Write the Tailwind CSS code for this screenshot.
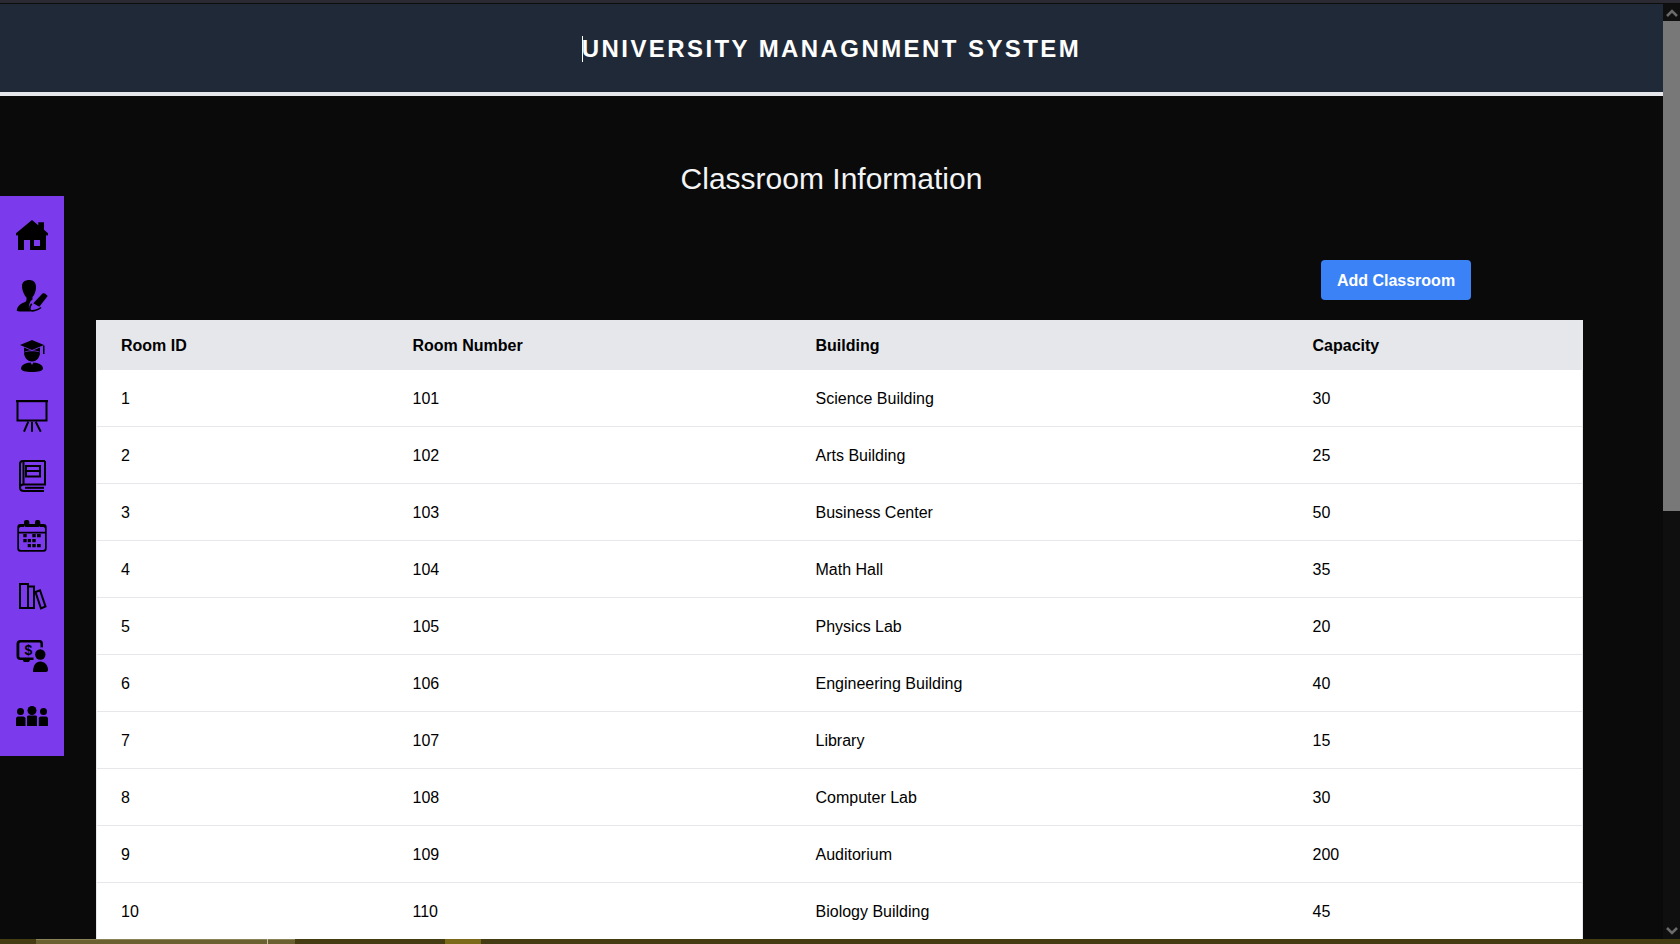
<!DOCTYPE html>
<html lang="en">
<head>
    <meta charset="UTF-8">
    <meta name="viewport" content="width=device-width, initial-scale=1.0">
    <title>University Managnment System</title>
    <script src="https://cdn.jsdelivr.net/npm/@tailwindcss/browser@4"></script>
</head>
<body class="h-screen overflow-hidden flex flex-col bg-[#0a0a0a] font-['Liberation_Sans',Arial,sans-serif]">
    <!-- browser chrome strip -->
    <div class="h-[4px] shrink-0 bg-[#2b2a33] border-b border-[#0c0c0d]"></div>

    <div class="flex-1 min-h-0 flex">
        <main class="relative flex-1 min-w-0 overflow-hidden">
            <header class="h-[88px] box-content bg-[#1f2937] border-b-4 border-[#e5e7eb] flex items-center justify-center">
                <h1 class="relative mt-[2px] text-2xl font-bold tracking-[2.42px] text-white">
                    <span class="absolute left-0 top-[3px] w-px h-[26px] bg-white"></span>UNIVERSITY MANAGNMENT SYSTEM
                </h1>
            </header>

            <!-- sidebar -->
            <nav class="absolute left-0 top-[192px] w-16 h-[560px] bg-[#7c3aed] flex flex-col items-center gap-7 py-6">
                <svg class="w-8 h-8" viewBox="0 0 32 32" fill="#000"><path fill-rule="evenodd" d="M16 0 22.3 5.2V2.3H28V9.800L32 13.200V15.600L30 15.200V30H18V20H8V30H2V15.200L0 15.600V13.200ZM18 20V26H24V20Z"/><path d="M14 20H18V30H14Z"/></svg>
                <svg class="w-8 h-8" viewBox="0 0 32 32" fill="#000"><path d="M6 6C6 2 9 0 13.500 0 18 0 20 3 20 7 20 11 18.500 15 16.500 17L16.500 19.500C14 21 12.500 25 13 29L14.500 31.600H6C3 31.600 1 31.300 .7 30.500 1.500 26 4 24 8 22.500 9.500 22 10.500 21 10.500 19.500V17.500C8 15 6 10 6 6Z"/><path d="M26.700 13.300 29 13.500 31.700 16 23.300 26.700 17.300 23.300Z"/><path d="M15.700 23.800C14 26 13.500 29 14.500 30.500 17 31.500 22 30 25 27.500" fill="none" stroke="#000" stroke-width="1.600"/></svg>
                <svg class="w-8 h-8" viewBox="0 0 32 32" fill="#000"><path d="M16 0 28 5 16 10 4 5Z"/><path d="M27 5.500H28.500V14H27Z"/><path d="M8 7.500 16 10.800 24 7.500V12C22 10.800 19 10.500 16 10.500 13 10.500 10 10.800 8 12Z"/><path d="M8 12.500C10 11.500 13 11.300 16 11.300 19 11.300 22 11.500 24 12.500 24 17 21 21.500 16 21.500 11 21.500 8 17 8 12.500Z"/><path d="M11 23 14.500 22.500 16 25 17.500 22.500 21 23C25 24 27 26 27 28.500 27 31 22 32 16 32 10 32 5 31 5 28.500 5 26 7 24 11 23Z"/></svg>
                <svg class="w-8 h-8" viewBox="0 0 32 32" fill="none" stroke="#000"><path d="M0 1H32" stroke-width="2.400"/><path d="M1.500 1V20.500H30.500V1" stroke-width="2"/><path d="M12.300 21.700 8 31.700M16 21.700V31.700M19.700 21.700 24.700 31.700" stroke-width="2"/></svg>
                <svg class="w-8 h-8" viewBox="0 0 32 32" fill="none" stroke="#000" stroke-width="2"><path d="M29 1H7C5 1 4 2.500 4 4V27.500C4 29.500 5.500 31 8 31H28M29 1V24.500H8C5.500 24.500 4 26 4 27.500"/><path d="M7.500 1V24"/><path d="M9 27.800H28"/><path d="M10 6H24V16.500H10ZM10 11H24"/></svg>
                <svg class="w-8 h-8" viewBox="0 0 32 32" fill="#000"><path fill-rule="evenodd" d="M4.300 4H8V7H5.300C4 7 3 7.500 3 9V11.700H29V9C29 7.500 28 7 26.700 7H24V4H27.700C30 4 30.700 5.500 30.700 7.500V28.500C30.700 30.500 30 31.700 27.700 31.700H4.300C2 31.700 1.300 30.500 1.300 28.500V7.500C1.300 5.500 2 4 4.300 4ZM3 13.500V28C3 29.300 3.700 30 5 30H27C28.300 30 29 29.300 29 28V13.500Z"/><path d="M10 4H22V7H10Z"/><rect x="8" y="0" width="5.300" height="7" rx="2"/><rect x="19" y="0" width="5.300" height="7" rx="2"/><path d="M7.300 14H10.700V17.300H7.300ZM16.300 14H19.700V17.300H16.300ZM21 14H24.700V17.300H21ZM7.300 19H10.700V22.300H7.300ZM11.700 19H15V22.300H11.700ZM16.300 19H19.700V22.300H16.300ZM11.700 24H15V27.300H11.700ZM16.300 24H19.700V27.300H16.300ZM21 24H24.700V27.300H21Z"/></svg>
                <svg class="w-8 h-8" viewBox="0 0 32 32" fill="none" stroke="#000" stroke-width="2"><path d="M4 4H12V28H4ZM12 6.500H18V28H12Z"/><path d="M19.500 12 24 10.300 29.500 26.500 25 28.500Z"/></svg>
                <svg class="w-8 h-8" viewBox="0 0 32 32" fill="#000"><path fill-rule="evenodd" d="M4.500 0H23.500C26 0 27 1.500 27 4V7.500A6 6 0 0 0 24.500 7.500V4C24.500 3 24 2.500 23 2.500H5C4 2.500 3.300 3 3.300 4V16C3.300 17 4 17.500 5 17.500H17.500L17.500 20H14L13 22H8.500C7 22 7 20 7 20H4.500C2 20 .5 18.500 .5 16V4C.5 1.500 2 0 4.500 0Z"/><circle cx="24.300" cy="14.500" r="5.200"/><path d="M17 32C17 25 20 21.500 24.300 21.500 28.500 21.500 32 25 32 30 32 31 31 32 30 32Z"/><text x="8.500" y="15" font-family="'Liberation Sans',Arial,sans-serif" font-size="14" font-weight="700">$</text></svg>
                <svg class="w-8 h-8" viewBox="0 0 32 32" fill="#000"><circle cx="16" cy="10.500" r="4.500"/><path d="M11 16.500C11 15.800 12 15.500 13 15.500H19C20 15.500 21 15.800 21 16.500V26H11Z"/><circle cx="4.500" cy="11.500" r="3.500"/><path d="M0 18.500C0 17.500 1 16.500 2 16.500H7C8.500 16.500 9.500 17.500 9.500 18.500V26H0Z"/><circle cx="27.500" cy="11.500" r="3.500"/><path d="M22.800 18.500C22.800 17.500 23.500 16.500 25 16.500H30C31 16.500 32 17.500 32 18.500V26H22.800Z"/></svg>
            </nav>

            <section class="ml-24 mr-20">
                <h2 class="mt-[65px] text-3xl text-center text-[#f3f4f6] -ml-24 -mr-20">Classroom Information</h2>
                <div class="mt-[63px] mb-5 mr-28 flex justify-end">
                    <button class="h-10 w-[150px] pt-px rounded bg-[#3b82f6] text-white font-bold">Add Classroom</button>
                </div>
                <table class="w-[1487px] table-fixed bg-white text-black text-left border-x border-[#e5e7eb]">
                    <colgroup>
                        <col class="w-[292px]">
                        <col class="w-[403px]">
                        <col class="w-[497px]">
                        <col>
                    </colgroup>
                    <thead class="bg-[#e5e7eb] [&_th]:pt-[2px]">
                        <tr class="h-[50px]">
                            <th class="px-6 font-bold">Room ID</th>
                            <th class="px-6 font-bold">Room Number</th>
                            <th class="px-6 font-bold">Building</th>
                            <th class="px-6 font-bold">Capacity</th>
                        </tr>
                    </thead>
                    <tbody class="[&_td]:pt-[2px]">
                        <tr class="h-[56px] border-b border-[#e5e7eb]"><td class="px-6">1</td><td class="px-6">101</td><td class="px-6">Science Building</td><td class="px-6">30</td></tr>
                        <tr class="h-[57px] border-b border-[#e5e7eb]"><td class="px-6">2</td><td class="px-6">102</td><td class="px-6">Arts Building</td><td class="px-6">25</td></tr>
                        <tr class="h-[57px] border-b border-[#e5e7eb]"><td class="px-6">3</td><td class="px-6">103</td><td class="px-6">Business Center</td><td class="px-6">50</td></tr>
                        <tr class="h-[57px] border-b border-[#e5e7eb]"><td class="px-6">4</td><td class="px-6">104</td><td class="px-6">Math Hall</td><td class="px-6">35</td></tr>
                        <tr class="h-[57px] border-b border-[#e5e7eb]"><td class="px-6">5</td><td class="px-6">105</td><td class="px-6">Physics Lab</td><td class="px-6">20</td></tr>
                        <tr class="h-[57px] border-b border-[#e5e7eb]"><td class="px-6">6</td><td class="px-6">106</td><td class="px-6">Engineering Building</td><td class="px-6">40</td></tr>
                        <tr class="h-[57px] border-b border-[#e5e7eb]"><td class="px-6">7</td><td class="px-6">107</td><td class="px-6">Library</td><td class="px-6">15</td></tr>
                        <tr class="h-[57px] border-b border-[#e5e7eb]"><td class="px-6">8</td><td class="px-6">108</td><td class="px-6">Computer Lab</td><td class="px-6">30</td></tr>
                        <tr class="h-[57px] border-b border-[#e5e7eb]"><td class="px-6">9</td><td class="px-6">109</td><td class="px-6">Auditorium</td><td class="px-6">200</td></tr>
                        <tr class="h-[57px] border-b border-[#e5e7eb]"><td class="px-6">10</td><td class="px-6">110</td><td class="px-6">Biology Building</td><td class="px-6">45</td></tr>
                    </tbody>
                </table>
            </section>
        </main>

        <!-- scrollbar -->
        <div class="w-[17px] shrink-0 bg-[#0f0f10] flex flex-col">
            <div class="h-[17px] flex items-center justify-center">
                <svg class="w-3 h-2" viewBox="0 0 12 8" fill="none" stroke="#6b6b6b" stroke-width="2.500"><path d="M1 7 6 2 11 7"/></svg>
            </div>
            <div class="h-[490px] bg-[#787878]"></div>
            <div class="mt-auto h-[17px] flex items-center justify-center">
                <svg class="w-3 h-2" viewBox="0 0 12 8" fill="none" stroke="#6b6b6b" stroke-width="2.500"><path d="M1 1 6 6 11 1"/></svg>
            </div>
        </div>
    </div>

    <!-- desktop strip under the window -->
    <div class="h-[5px] shrink-0 bg-[#463c14] flex">
        <div class="ml-[36px] w-[231px] bg-[#6a6030] border-t border-[#8a8258]"></div>
        <div class="w-px bg-[#c8c4a8]"></div>
        <div class="w-[27px] bg-[#6a6030] border-t border-[#8a8258]"></div>
        <div class="ml-[150px] w-[36px] bg-[#7a6a1a]"></div>
    </div>
</body>
</html>
